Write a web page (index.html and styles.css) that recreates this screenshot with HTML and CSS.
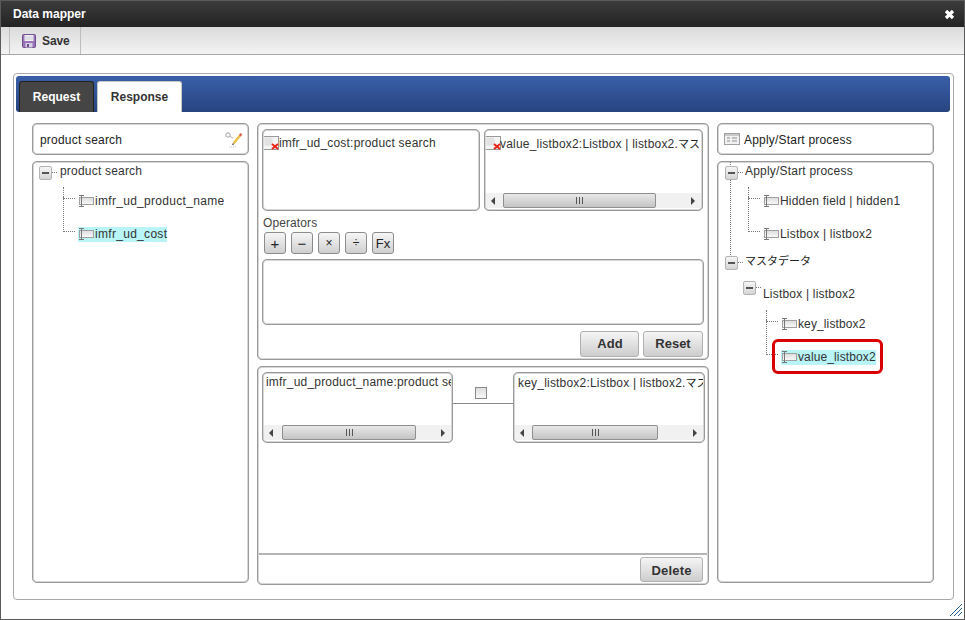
FILE: index.html
```html
<!DOCTYPE html>
<html lang="en">
<head>
<meta charset="utf-8">
<title>Data mapper</title>
<link rel="stylesheet" href="styles.css">
</head>
<body>
<svg class="defs" width="0" height="0" aria-hidden="true">
  <defs>
    <linearGradient id="fieldFill" x1="0" y1="0" x2="0" y2="1"><stop offset="0" stop-color="#dcdcdc"/><stop offset="1" stop-color="#fafafa"/></linearGradient>
    <symbol id="field" viewBox="0 0 16 14">
      <rect x="1.5" y="3.5" width="14" height="7" fill="url(#fieldFill)" stroke="#a0a0a0"/>
      <path d="M1 1.5h5M1 12.5h5M3.5 1.5v11" fill="none" stroke="#777"/>
    </symbol>
    <symbol id="broken" viewBox="0 0 16 14">
      <rect x="0.5" y="0.5" width="15" height="13" fill="#f4f4f4" stroke="#9a9a9a"/>
      <rect x="1.5" y="1.5" width="8" height="8" fill="#e2e2e2"/>
      <path d="M9 8l6 5M15 8l-6 5" stroke="#e8261a" stroke-width="2" fill="none"/>
    </symbol>
  </defs>
</svg>
<div class="window">
  <header class="title">
    <span class="title-text">Data mapper</span>
    <svg class="close" width="11" height="11" viewBox="0 0 11 11"><path d="M2 2l7 7M9 2l-7 7" stroke="#fff" stroke-width="3.2" fill="none"/></svg>
  </header>
  <div class="toolbar">
    <div class="save">
      <svg width="14" height="14" viewBox="0 0 14 14">
        <rect x="0.5" y="0.5" width="13" height="13" rx="1" fill="#9a72b8" stroke="#6d4f8c"/>
        <rect x="2.5" y="1" width="9" height="6" fill="#f2f2f4"/>
        <path d="M3 3h8M3 5h8" stroke="#c9c9d4"/>
        <rect x="3.5" y="9" width="7" height="4.5" fill="#d8d0e4"/>
        <rect x="5" y="10" width="2" height="3" fill="#6d4f8c"/>
      </svg>
      <span>Save</span>
    </div>
  </div>
  <main class="content">
    <section class="panel">
      <nav class="tabbar">
        <div class="tab tab-dark">Request</div>
        <div class="tab tab-light">Response</div>
      </nav>
      <div class="columns">
        <div class="side">
          <div class="box head-box">
            <span class="head-text">product search</span>
            <svg class="wand" width="18" height="17" viewBox="0 0 18 17">
              <circle cx="3" cy="4" r="2.2" fill="#fff" stroke="#a0a0a0"/>
              <path d="M5 5.5l3 1.5" stroke="#b0b0b0"/>
              <path d="M8.5 12.5L15 4.5" stroke="#e8c04a" stroke-width="2.6"/>
              <path d="M14.8 4.7l1.6-2" stroke="#d8604c" stroke-width="2.4"/>
              <path d="M8.5 12.5l-1 1.5" stroke="#666" stroke-width="1.4"/>
              <path d="M4 16h8" stroke="#c4c4c4" stroke-dasharray="1 1"/>
            </svg>
          </div>
          <div class="box tree">
            <div class="row root"><span class="toggle"></span><span class="node-text">product search</span></div>
            <div class="row leaf first gap-30 roomy"><span class="leaf-label"><svg class="icon"><use href="#field"/></svg>imfr_ud_product_name</span></div>
            <div class="row leaf second gap-33 roomy"><span class="leaf-label selected"><svg class="icon"><use href="#field"/></svg>imfr_ud_cost</span></div>
          </div>
        </div>

        <div class="middle">
          <div class="box mid-top">
            <div class="pair">
              <div class="box inner w218">
                <div class="inner-text with-icon"><svg class="icon broken"><use href="#broken"/></svg>imfr_ud_cost:product search</div>
              </div>
              <div class="box inner w219">
                <div class="inner-text with-icon"><svg class="icon broken overlap"><use href="#broken"/></svg><span>value_listbox2:Listbox | listbox2.<span class="cjk">マスタデータ</span></span></div>
                <div class="scroll"><span class="arrow left"></span><span class="thumb t153"><i></i></span><span class="arrow right"></span></div>
              </div>
            </div>
            <div class="op-label">Operators</div>
            <div class="ops">
              <div class="op">+</div>
              <div class="op">−</div>
              <div class="op small">×</div>
              <div class="op small">÷</div>
              <div class="op">Fx</div>
            </div>
            <div class="box formula"></div>
            <div class="actions">
              <div class="btn add">Add</div>
              <div class="btn reset">Reset</div>
            </div>
          </div>
          <div class="box mid-bottom">
            <div class="map-area">
              <div class="box inner map-left">
                <div class="inner-text plain">imfr_ud_product_name:product search</div>
                <div class="scroll"><span class="arrow left wide"></span><span class="thumb t134"><i></i></span><span class="arrow right"></span></div>
              </div>
              <div class="link">
                <div class="check"></div>
                <div class="link-line"></div>
              </div>
              <div class="box inner map-right">
                <div class="inner-text plain pad3">key_listbox2:Listbox | listbox2.<span class="cjk">マスタデータ</span></div>
                <div class="scroll"><span class="arrow left"></span><span class="thumb t126"><i></i></span><span class="arrow right"></span></div>
              </div>
            </div>
            <div class="map-foot"><div class="btn delete">Delete</div></div>
          </div>
        </div>

        <div class="side">
          <div class="box head-box right-head">
            <svg width="16" height="12" viewBox="0 0 16 12">
              <rect x="0.5" y="0.5" width="15" height="11" fill="#f1f1f1" stroke="#a0a0a0"/>
              <rect x="1" y="1" width="14" height="2" fill="#c8c8c8"/>
              <path d="M3 5h3M8 5h5M3 8h3M8 8h5" stroke="#8e8e8e"/>
            </svg>
            <span class="head-text">Apply/Start process</span>
          </div>
          <div class="box tree tree-right">
            <div class="row root"><span class="toggle"></span><span class="node-text tight">Apply/Start process</span></div>
            <div class="row leaf first gap-30"><span class="leaf-label"><svg class="icon"><use href="#field"/></svg>Hidden field | hidden1</span></div>
            <div class="row leaf second gap-33"><span class="leaf-label"><svg class="icon"><use href="#field"/></svg>Listbox | listbox2</span></div>
            <div class="row root gap-27"><span class="toggle up"></span><span class="node-text tight cjk raised">マスタデータ</span></div>
            <div class="row sub gap-33"><span class="toggle high"></span><span class="node-text tight">Listbox | listbox2</span></div>
            <div class="row leaf first deep gap-30"><span class="leaf-label"><svg class="icon"><use href="#field"/></svg>key_listbox2</span></div>
            <div class="row leaf second deep gap-33">
              <span class="leaf-label selected"><svg class="icon"><use href="#field"/></svg>value_listbox2</span>
              <span class="callout"></span>
            </div>
          </div>
        </div>
      </div>
    </section>
  </main>
  <svg class="grip" width="12" height="12" viewBox="0 0 12 12"><path d="M0 12L12 0M4 12l8-8M8 12l4-4" stroke="#1f5f96" stroke-width="1" fill="none"/></svg>
</div>
</body>
</html>
```

FILE: styles.css
```css
* { box-sizing: border-box; }
html, body { margin: 0; padding: 0; }
body {
  width: 965px;
  height: 620px;
  overflow: hidden;
  font-family: "Liberation Sans", Arial, "Noto Sans CJK JP", sans-serif;
  font-size: 12px;
  color: #333;
  background: #fff;
}
.defs { position: absolute; }
.window {
  position: relative;
  width: 965px;
  height: 620px;
  border: 1px solid #5a5a5a;
  display: flex;
  flex-direction: column;
  background: #fff;
}
.title {
  height: 26px;
  flex: none;
  display: flex;
  align-items: center;
  justify-content: space-between;
  padding: 0 9px 0 12px;
  background: linear-gradient(#3c3c3c, #232323);
}
.title-text { color: #fff; font-weight: bold; }
.toolbar {
  height: 28px;
  flex: none;
  padding-left: 8px;
  border-bottom: 1px solid #a8a8a8;
  background: linear-gradient(#dbdbdb, #f3f3f3);
}
.save {
  width: 72px;
  height: 27px;
  display: flex;
  align-items: center;
  gap: 6px;
  padding-left: 12px;
  border-left: 1px solid #bdbdbd;
  border-right: 1px solid #bdbdbd;
  font-weight: bold;
  letter-spacing: -0.1px;
}
.content {
  flex: 1;
  padding: 18px 10px 19px 12px;
}
.panel {
  height: 100%;
  border: 1px solid #a8a8a8;
  border-radius: 4px;
  padding: 2px 3px 0 2px;
}
.tabbar {
  height: 36px;
  padding: 5px 0 0 3px;
  display: flex;
  gap: 3px;
  align-items: flex-end;
  border-radius: 3px;
  background: linear-gradient(#3a5fa9, #27447f);
}
.tab {
  height: 31px;
  display: flex;
  align-items: center;
  justify-content: center;
  font-weight: bold;
  border-radius: 3px 3px 0 0;
}
.tab-dark {
  width: 75px;
  color: #fff;
  background: #454545;
  border: 1px solid #222;
  border-bottom: 0;
}
.tab-light {
  width: 85px;
  background: #fff;
  border: 1px solid #c8c8c8;
  border-bottom: 0;
  color: #333;
}
.columns {
  padding: 11px 0 0 16px;
  display: flex;
  gap: 8px;
}
.box {
  border: 2px solid #d6d6d6;
  border-radius: 5px;
  background: #fff;
  outline: 1px solid #9a9a9a;
  outline-offset: -1px;
}
.side {
  width: 217px;
  display: flex;
  flex-direction: column;
  gap: 6px;
}
.head-box {
  height: 32px;
  display: flex;
  align-items: center;
  justify-content: space-between;
  padding: 0 4px 0 6px;
}
.head-text { letter-spacing: 0.2px; color: #222; padding-top: 1px; }
.right-head { justify-content: flex-start; gap: 4px; padding-left: 5px; }
.tree {
  position: relative;
  height: 422px;
  padding: 0 0 0 5px;
}
.tree-right { padding-left: 6px; }
.tree-right::before {
  content: "";
  position: absolute;
  left: 11px;
  top: -1px;
  height: 93px;
  border-left: 1px dotted #777;
}
.row {
  position: relative;
  height: 16px;
  display: flex;
  align-items: center;
  letter-spacing: 0.2px;
}
.roomy { letter-spacing: 0.3px; }
.deep { letter-spacing: 0.12px; }
.gap-30 { margin-top: 14px; }
.gap-33 { margin-top: 17px; }
.gap-27 { margin-top: 11px; }
.toggle {
  position: relative;
  flex: none;
  width: 13px;
  height: 14px;
  margin-top: 4px;
  margin-right: 8px;
  border: 1px solid #b4b4b4;
  border-radius: 2px;
  background: linear-gradient(#f6f6f6, #d4d4d4);
}
.toggle::before {
  content: "";
  position: absolute;
  left: 2px;
  right: 2px;
  top: 5px;
  height: 2px;
  background: #555;
}
.toggle::after {
  content: "";
  position: absolute;
  left: 12px;
  top: 5px;
  width: 5px;
  border-top: 1px dotted #777;
}
.toggle.up { margin-top: 4px; }
.toggle.high { margin-top: -12px; margin-right: 7px; }
.node-text { color: #333; }
.node-text.tight { margin-left: -1px; }
.sub { margin-left: 18px; }
.sub .node-text.tight { margin-left: 0; }
.cjk {
  font-family: "Noto Sans CJK JP", sans-serif;
  font-size: 11px;
  line-height: 14px;
  letter-spacing: 0;
  font-weight: 400;
  color: #222;
}
.node-text.raised { padding-bottom: 2px; }
.leaf { margin-left: 39px; }
.tree-right .leaf { margin-left: 38px; }
.tree-right .leaf.deep { margin-left: 56px; }
.leaf::before {
  content: "";
  position: absolute;
  left: -15px;
  width: 11px;
  border-left: 1px dotted #777;
  border-bottom: 1px dotted #777;
}
.leaf.first::before { top: -6px; height: 11px; }
.leaf.second::before { top: -29px; height: 34px; }
.leaf-label {
  display: inline-flex;
  align-items: center;
  height: 15px;
}
.selected { background: #b9f4f7; }
.icon {
  width: 16px;
  height: 14px;
  flex: none;
  margin-right: 1px;
}
.callout {
  position: absolute;
  left: -9px;
  top: -10px;
  width: 111px;
  height: 35px;
  border: 3px solid #d80000;
  border-radius: 6px;
}
.middle {
  width: 452px;
  display: flex;
  flex-direction: column;
  gap: 6px;
}
.mid-top {
  height: 237px;
  padding: 4px 3px 0 3px;
}
.pair { display: flex; gap: 4px; }
.inner {
  display: flex;
  flex-direction: column;
  overflow: hidden;
}
.w218 { width: 218px; height: 82px; }
.w219 { width: 219px; height: 82px; }
.inner-text {
  flex: 1;
  min-height: 0;
  white-space: nowrap;
  overflow: hidden;
  letter-spacing: 0.2px;
}
.with-icon { padding-top: 5px; line-height: 14px; display: flex; align-items: flex-start; }
.broken { margin-left: -1px; margin-right: 0; }
.broken.overlap { margin-right: -1px; }
.plain { padding: 1px 0 0 2px; line-height: 14px; }
.pad3 { padding-left: 3px; }
.scroll {
  height: 15px;
  flex: none;
  margin-bottom: 1px;
  display: flex;
  align-items: stretch;
  background: #f1f1f1;
}
.arrow {
  position: relative;
  width: 17px;
  flex: none;
}
.arrow.wide { width: 18px; }
.arrow.right { flex: 1; }
.arrow::after {
  content: "";
  position: absolute;
  top: 4px;
  border-style: solid;
  border-color: transparent;
  border-width: 4px 4px 4px 0;
  border-right-color: #444;
  left: 5px;
}
.arrow.right::after {
  left: auto;
  right: 6px;
  border-width: 4px 0 4px 4px;
  border-left-color: #444;
  border-right-color: transparent;
}
.thumb {
  display: flex;
  align-items: center;
  justify-content: center;
  flex: none;
  border: 1px solid #8f8f8f;
  border-radius: 2px;
  background: linear-gradient(#e8e8e8, #c4c4c4);
}
.thumb i {
  width: 7px;
  height: 7px;
  background: repeating-linear-gradient(90deg, #555 0 1px, transparent 1px 3px);
}
.t153 { width: 153px; }
.t134 { width: 134px; }
.t126 { width: 126px; }
.op-label { margin-top: 5px; padding-left: 1px; height: 14px; line-height: 14px; color: #444; letter-spacing: 0.1px; }
.ops { margin: 2px 0 0 2px; display: flex; gap: 5px; }
.op {
  width: 22px;
  height: 22px;
  display: flex;
  align-items: center;
  justify-content: center;
  border: 1px solid #8c8c8c;
  border-radius: 3px;
  background: linear-gradient(#f6f6f6, #cfcfcf);
  font-size: 15px;
  color: #222;
}
.op.small { font-size: 12px; }
.op:last-child { font-size: 13px; }
.formula { margin-top: 5px; width: 442px; height: 66px; }
.actions {
  margin: 6px 1px 0 0;
  display: flex;
  justify-content: flex-end;
  gap: 4px;
}
.btn {
  height: 26px;
  padding-bottom: 1px;
  display: flex;
  align-items: center;
  justify-content: center;
  border: 1px solid #b0b0b0;
  border-radius: 3px;
  background: linear-gradient(#f5f5f5, #cdcdcd);
  font-size: 13px;
  font-weight: bold;
  color: #333;
}
.add { width: 59px; padding-left: 1px; }
.reset { width: 60px; }
.delete { width: 63px; height: 25px; padding-bottom: 0; padding-top: 1px; letter-spacing: 0.2px; }
.mid-bottom {
  height: 219px;
  display: flex;
  flex-direction: column;
}
.map-area {
  flex: 1;
  padding: 4px 2px 0 3px;
  display: flex;
  align-items: flex-start;
}
.map-left { width: 191px; height: 71px; }
.map-right { width: 192px; height: 71px; }
.link {
  width: 60px;
  display: flex;
  flex-direction: column;
}
.check {
  width: 12px;
  height: 12px;
  margin: 15px 0 0 22px;
  border: 1px solid #8a8a8a;
  background: linear-gradient(#dedede, #f8f8f8);
}
.link-line { margin-top: 4px; border-top: 1px solid #8a8a8a; }
.map-foot {
  height: 30px;
  flex: none;
  padding: 2px 4px 0 0;
  display: flex;
  justify-content: flex-end;
  border-top: 2px solid #b4b4b4;
}
.grip {
  position: absolute;
  right: 2px;
  bottom: 3px;
}
```
